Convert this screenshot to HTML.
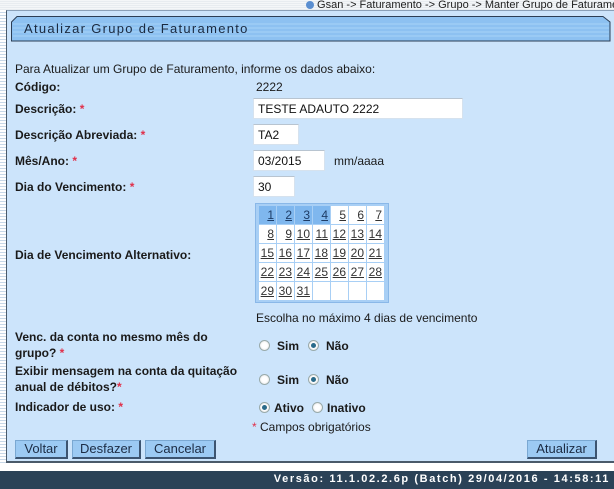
<!DOCTYPE html>
<html><head><meta charset="utf-8"><style>
*{margin:0;padding:0;box-sizing:border-box}
body{width:614px;height:489px;overflow:hidden;background:#fff;font-family:"Liberation Sans",Arial,sans-serif;font-size:12px;color:#1a1a1a;position:relative}
.a{position:absolute;white-space:nowrap}
.b{font-weight:bold}
.r{color:#e0304a}
.inp{position:absolute;background:#fff;border:1px solid #d6e2ee;border-top-color:#b8c4d0;height:21px;padding:3px 4px;font-size:12px;color:#111}
.btn{position:absolute;top:440px;height:19px;background:#9ccaf3;border:1px solid #7aa8d2;border-right:2px solid #3c5470;border-bottom:2px solid #3c5470;font-size:13px;color:#1c2c44;text-align:center;line-height:16px}
.cal{border-collapse:separate;border-spacing:1px}
.cal td{width:17px;height:18px;text-align:right;padding-right:2px;font-size:12px;color:#333;text-decoration:underline;background:#fff}
.cal td.s{background:#7fb7ee;color:#1e3c66}
.rad{position:absolute;width:11px;height:11px;border-radius:50%;border:1px solid #9aa;background:radial-gradient(circle,#fff 40%,#ddd)}
.rad.on::after{content:"";position:absolute;left:2px;top:2px;width:5px;height:5px;border-radius:50%;background:#2a6a8a}
</style></head><body>
<div class="a" style="left:0;top:0;width:614px;height:10px;background:repeating-linear-gradient(#f4f6f8 0 1px,#e8ecf0 1px 2px)"></div>
<div class="a" style="left:306px;top:-1px;font-size:11px;color:#222"><span style="display:inline-block;width:8px;height:8px;border-radius:50%;background:#5a8ed0;vertical-align:-1px"></span> Gsan -&gt; Faturamento -&gt; Grupo -&gt; Manter Grupo de Faturamento</div>
<div class="a" style="left:0;top:10px;width:6px;height:455px;background:repeating-linear-gradient(#fff 0 2px,#c8d8e8 2px 3px)"></div>
<div class="a" style="left:6px;top:10px;width:608px;height:453px;background:#cce4fb;border-left:1px solid #4a5a6a;border-top:1px solid #8aa0b8;border-bottom:2px solid #4a5a6a"></div>
<svg class="a" style="left:11px;top:16px" width="600" height="26"><polygon points="6,0.5 592,0.5 599,6 599,25 0.5,25 0.5,6" fill="#8dc1f1" stroke="#2c3e55"/><g stroke="#a8d2f8" stroke-width="1"><line x1="2" y1="8" x2="598" y2="8"/><line x1="2" y1="12" x2="598" y2="12"/><line x1="2" y1="16" x2="598" y2="16"/><line x1="2" y1="20" x2="598" y2="20"/></g></svg>
<div class="a" style="left:24px;top:21px;font-size:13px;letter-spacing:1.3px;color:#1a2a40">Atualizar Grupo de Faturamento</div>
<div class="a" style="left:15px;top:62px">Para Atualizar um Grupo de Faturamento, informe os dados abaixo:</div>
<div class="a b" style="left:15px;top:80px">Código:</div>
<div class="a" style="left:256px;top:80px">2222</div>
<div class="a b" style="left:15px;top:102px">Descrição: <span class="r">*</span></div>
<div class="inp" style="left:253px;top:98px;width:210px">TESTE ADAUTO 2222</div>
<div class="a b" style="left:15px;top:128px">Descrição Abreviada: <span class="r">*</span></div>
<div class="inp" style="left:253px;top:124px;width:46px">TA2</div>
<div class="a b" style="left:15px;top:154px">Mês/Ano: <span class="r">*</span></div>
<div class="inp" style="left:253px;top:150px;width:72px">03/2015</div>
<div class="a" style="left:334px;top:154px">mm/aaaa</div>
<div class="a b" style="left:15px;top:180px">Dia do Vencimento: <span class="r">*</span></div>
<div class="inp" style="left:253px;top:176px;width:42px">30</div>
<div class="a b" style="left:15px;top:248px">Dia de Vencimento Alternativo:</div>
<div class="a" style="left:255px;top:203px;width:134px;height:100px;background:#a8cff5;border:1px solid #8ab8e8;padding:1px 2px">
<table class="cal">
<tr><td class="s">1</td><td class="s">2</td><td class="s">3</td><td class="s">4</td><td>5</td><td>6</td><td>7</td></tr>
<tr><td>8</td><td>9</td><td>10</td><td>11</td><td>12</td><td>13</td><td>14</td></tr>
<tr><td>15</td><td>16</td><td>17</td><td>18</td><td>19</td><td>20</td><td>21</td></tr>
<tr><td>22</td><td>23</td><td>24</td><td>25</td><td>26</td><td>27</td><td>28</td></tr>
<tr><td>29</td><td>30</td><td>31</td><td></td><td></td><td></td><td></td></tr>
</table></div>
<div class="a" style="left:256px;top:311px">Escolha no máximo 4 dias de vencimento</div>
<div class="a b" style="left:15px;top:329px;line-height:16px">Venc. da conta no mesmo mês do<br>grupo? <span class="r">*</span></div>
<div class="rad" style="left:259px;top:340px"></div><div class="a b" style="left:277px;top:339px">Sim</div>
<div class="rad on" style="left:308px;top:340px"></div><div class="a b" style="left:326px;top:339px">Não</div>
<div class="a b" style="left:15px;top:363px;line-height:16px">Exibir mensagem na conta da quitação<br>anual de débitos?<span class="r">*</span></div>
<div class="rad" style="left:259px;top:374px"></div><div class="a b" style="left:277px;top:373px">Sim</div>
<div class="rad on" style="left:308px;top:374px"></div><div class="a b" style="left:326px;top:373px">Não</div>
<div class="a b" style="left:15px;top:400px">Indicador de uso: <span class="r">*</span></div>
<div class="rad on" style="left:259px;top:402px"></div><div class="a b" style="left:274px;top:401px">Ativo</div>
<div class="rad" style="left:312px;top:402px"></div><div class="a b" style="left:327px;top:401px">Inativo</div>
<div class="a" style="left:252px;top:420px"><span class="r">*</span> Campos obrigatórios</div>
<div class="btn" style="left:15px;width:53px">Voltar</div>
<div class="btn" style="left:72px;width:69px">Desfazer</div>
<div class="btn" style="left:145px;width:71px">Cancelar</div>
<div class="btn" style="left:527px;width:70px">Atualizar</div>
<div class="a" style="left:0;top:471px;width:614px;height:18px;background:#2b4257"></div>
<div class="a b" style="right:4px;top:473px;color:#fff;font-size:11px;letter-spacing:1.6px">Versão: 11.1.02.2.6p (Batch) 29/04/2016 - 14:58:11</div>
</body></html>
